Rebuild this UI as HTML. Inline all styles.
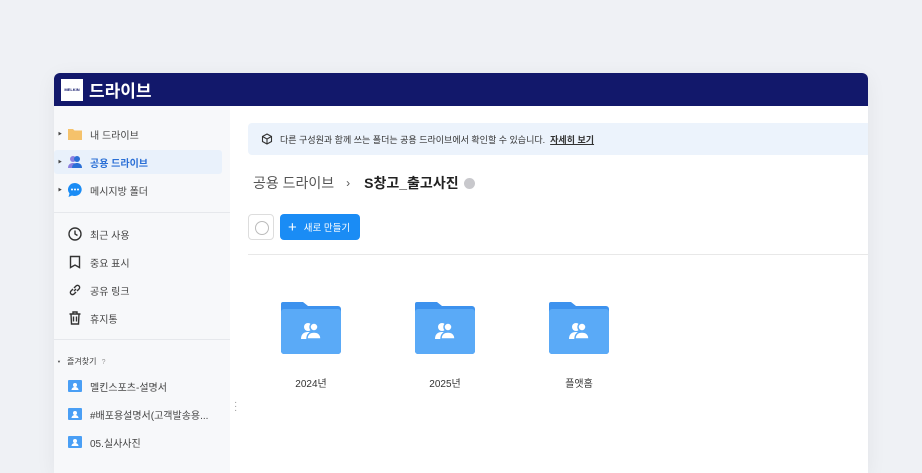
<!DOCTYPE html><html><head><meta charset="utf-8"><style>
*{margin:0;padding:0;box-sizing:border-box}
body{width:922px;height:468px;background:#eff1f5;font-family:"Liberation Sans","Noto Sans CJK KR",sans-serif;position:relative;overflow:hidden;color:#333}
.win{position:absolute;left:54px;top:73px;width:814px;height:400px;background:#fff;border-radius:6px 6px 0 0;overflow:hidden;box-shadow:0 4px 20px rgba(0,0,0,.06)}
.hd{height:33px;background:#12186b;display:flex;align-items:center;padding-left:7px}
.logo{width:22px;height:22px;background:#fff;display:flex;align-items:center;justify-content:center;font-size:4px;font-weight:bold;color:#12186b}
.hd span{color:#fff;font-size:17px;margin-left:6px;font-weight:bold}
.sb{position:absolute;left:0;top:33px;width:176px;bottom:0;background:#f7f8fa}
.it{position:absolute;left:0;height:24px;width:168px;display:flex;align-items:center;font-size:10px;color:#444}
.it .ar{position:absolute;left:4px;font-size:4px;color:#444}
.it .ic{position:absolute;left:13px;width:16px;height:16px}
.it .tx{position:absolute;left:36px}
.sel{background:#e9f1fb;border-radius:3px;color:#2a6fd6;font-weight:bold}
.hr{position:absolute;left:0;width:176px;height:1px;background:#e6e8ec}
.main{position:absolute;left:176px;top:33px;right:0;bottom:0}
.ban{position:absolute;left:18px;top:17px;right:0;height:32px;background:#ecf3fc;border-radius:4px 0 0 4px;font-size:9px;display:flex;align-items:center;padding-left:32px;color:#333}
.ban b{text-decoration:underline;margin-left:5px}
.bc{position:absolute;left:23px;top:67px;font-size:14px;color:#555;display:flex;align-items:center}
.bc b{color:#222;margin-left:14px}
.ck{position:absolute;left:18px;top:108px;width:26px;height:26px;border:1px solid #ddd;border-radius:4px}
.ck:after{content:"";position:absolute;left:6px;top:6px;width:12px;height:12px;border:1px solid #bbb;border-radius:50%}
.btn{position:absolute;left:50px;top:108px;width:80px;height:26px;background:#1a8cf5;border-radius:4px;color:#fff;font-size:9.5px;display:flex;align-items:center;padding-left:8px}
.line{position:absolute;left:18px;right:0;top:148px;height:1px;background:#e8e8e8}
.f{position:absolute;top:196px;width:60px;text-align:center;font-size:10px;color:#333}
.f .lb{margin-top:18px}
</style></head><body>
<div class="win">
<div class="hd"><div class="logo">MELKIN</div><span>드라이브</span></div>
<div class="sb">
<div class="it" style="top:16px"><span class="ar">▶</span><svg class="ic" viewBox="0 0 16 16"><path d="M1 3h5l1.5 1.5H15V14H1z" fill="#f5c26b"/></svg><span class="tx">내 드라이브</span></div>
<div class="it sel" style="top:44px"><span class="ar">▶</span><svg class="ic" viewBox="0 0 16 16"><circle cx="6" cy="5" r="3" fill="#8b7fe0"/><path d="M1 14c0-4 3-5 5-5s5 1 5 5z" fill="#8b7fe0"/><circle cx="10" cy="5" r="3" fill="#2a6fd6"/><path d="M5 14c0-4 3-5 5-5s5 1 5 5z" fill="#2a6fd6"/></svg><span class="tx">공용 드라이브</span></div>
<div class="it" style="top:72px"><span class="ar">▶</span><svg class="ic" viewBox="0 0 16 16"><path d="M8 1a7 6.5 0 1 1-3 12.5L1.5 15l1-3.5A7 6.5 0 0 1 8 1z" fill="#1a8cf5"/><circle cx="5" cy="7.5" r="1" fill="#fff"/><circle cx="8" cy="7.5" r="1" fill="#fff"/><circle cx="11" cy="7.5" r="1" fill="#fff"/></svg><span class="tx">메시지방 폴더</span></div>
<div class="hr" style="top:106px"></div>
<div class="it" style="top:116px"><svg class="ic" viewBox="0 0 16 16" fill="none" stroke="#333" stroke-width="1.4"><circle cx="8" cy="8" r="6"/><path d="M8 4.5V8l2.5 1.5"/></svg><span class="tx">최근 사용</span></div>
<div class="it" style="top:144px"><svg class="ic" viewBox="0 0 16 16" fill="none" stroke="#333" stroke-width="1.4"><path d="M3.5 2.5h9v11L8 11l-4.5 2.5z"/></svg><span class="tx">중요 표시</span></div>
<div class="it" style="top:172px"><svg class="ic" viewBox="0 0 16 16" fill="none" stroke="#333" stroke-width="1.4"><path d="M7 9l2-2M6 7L4 9a2 2 0 0 0 3 3l2-2M10 9l2-2a2 2 0 0 0-3-3L7 6"/></svg><span class="tx">공유 링크</span></div>
<div class="it" style="top:200px"><svg class="ic" viewBox="0 0 16 16" fill="none" stroke="#333" stroke-width="1.4"><path d="M2.5 4h11M6 4V2h4v2M4 4l.5 10h7L12 4M6.5 6.5v5M9.5 6.5v5"/></svg><span class="tx">휴지통</span></div>
<div class="hr" style="top:233px"></div>
<div class="it" style="top:243px;font-size:8px"><span class="ar" style="left:3px">▼</span><span style="position:absolute;left:13px">즐겨찾기 <span style="color:#999;font-size:7px;margin-left:3px">?</span></span></div>
<div class="it" style="top:268px"><svg class="ic" viewBox="0 0 16 16"><rect x="1" y="2" width="14" height="12" rx="1" fill="#4a9ff5"/><circle cx="8" cy="7" r="2" fill="#fff"/><path d="M4.5 12c0-2 2-3 3.5-3s3.5 1 3.5 3z" fill="#fff"/></svg><span class="tx">멜킨스포츠-설명서</span></div>
<div class="it" style="top:296px"><svg class="ic" viewBox="0 0 16 16"><rect x="1" y="2" width="14" height="12" rx="1" fill="#4a9ff5"/><circle cx="8" cy="7" r="2" fill="#fff"/><path d="M4.5 12c0-2 2-3 3.5-3s3.5 1 3.5 3z" fill="#fff"/></svg><span class="tx">#배포용설명서(고객발송용...</span></div>
<div class="it" style="top:324px"><svg class="ic" viewBox="0 0 16 16"><rect x="1" y="2" width="14" height="12" rx="1" fill="#4a9ff5"/><circle cx="8" cy="7" r="2" fill="#fff"/><path d="M4.5 12c0-2 2-3 3.5-3s3.5 1 3.5 3z" fill="#fff"/></svg><span class="tx">05.실사사진</span></div>
</div>
<div style="position:absolute;left:180px;top:328px;color:#999;font-size:10px;line-height:4px">·<br>·<br>·</div>
<div class="main">
<div class="ban"><svg style="position:absolute;left:13px;top:10px" width="12" height="12" viewBox="0 0 12 12" fill="none" stroke="#333" stroke-width="1.1"><path d="M6 1l4.5 2.5v5L6 11 1.5 8.5v-5zM1.5 3.5L6 6l4.5-2.5M6 6v5"/></svg>다른 구성원과 함께 쓰는 폴더는 공용 드라이브에서 확인할 수 있습니다.<b>자세히 보기</b></div>
<div class="bc">공용 드라이브 <span style="margin-left:12px;font-size:12px">›</span><b>S창고_출고사진</b><span style="display:inline-block;width:11px;height:11px;border-radius:50%;background:#c8c8cc;margin-left:5px"></span></div>
<div class="ck"></div>
<div class="btn"><span style="font-size:15px;margin-right:7px;font-weight:300">+</span>새로 만들기</div>
<div class="line"></div>
<div class="f" style="left:51px"><svg width="60" height="52" viewBox="0 0 60 52"><path d="M2 0h20l5 4h30a3 3 0 0 1 3 3v42a3 3 0 0 1-3 3H3a3 3 0 0 1-3-3V2a2 2 0 0 1 2-2z" fill="#3d92ee"/><rect x="0" y="7" width="60" height="45" rx="3" fill="#5aaaf7"/><circle cx="27" cy="25" r="4" fill="#fff"/><path d="M20 37c0-5 3-7 7-7s7 2 7 7z" fill="#fff"/><circle cx="33" cy="25" r="4" fill="#fff" stroke="#5aaaf7" stroke-width="1.5"/><path d="M26 37c0-5 3-7 7-7s7 2 7 7z" fill="#fff" stroke="#5aaaf7" stroke-width="1.5"/></svg><div class="lb">2024년</div></div>
<div class="f" style="left:185px"><svg width="60" height="52" viewBox="0 0 60 52"><path d="M2 0h20l5 4h30a3 3 0 0 1 3 3v42a3 3 0 0 1-3 3H3a3 3 0 0 1-3-3V2a2 2 0 0 1 2-2z" fill="#3d92ee"/><rect x="0" y="7" width="60" height="45" rx="3" fill="#5aaaf7"/><circle cx="27" cy="25" r="4" fill="#fff"/><path d="M20 37c0-5 3-7 7-7s7 2 7 7z" fill="#fff"/><circle cx="33" cy="25" r="4" fill="#fff" stroke="#5aaaf7" stroke-width="1.5"/><path d="M26 37c0-5 3-7 7-7s7 2 7 7z" fill="#fff" stroke="#5aaaf7" stroke-width="1.5"/></svg><div class="lb">2025년</div></div>
<div class="f" style="left:319px"><svg width="60" height="52" viewBox="0 0 60 52"><path d="M2 0h20l5 4h30a3 3 0 0 1 3 3v42a3 3 0 0 1-3 3H3a3 3 0 0 1-3-3V2a2 2 0 0 1 2-2z" fill="#3d92ee"/><rect x="0" y="7" width="60" height="45" rx="3" fill="#5aaaf7"/><circle cx="27" cy="25" r="4" fill="#fff"/><path d="M20 37c0-5 3-7 7-7s7 2 7 7z" fill="#fff"/><circle cx="33" cy="25" r="4" fill="#fff" stroke="#5aaaf7" stroke-width="1.5"/><path d="M26 37c0-5 3-7 7-7s7 2 7 7z" fill="#fff" stroke="#5aaaf7" stroke-width="1.5"/></svg><div class="lb">플앳홈</div></div>
</div>
</div>
</body></html>
